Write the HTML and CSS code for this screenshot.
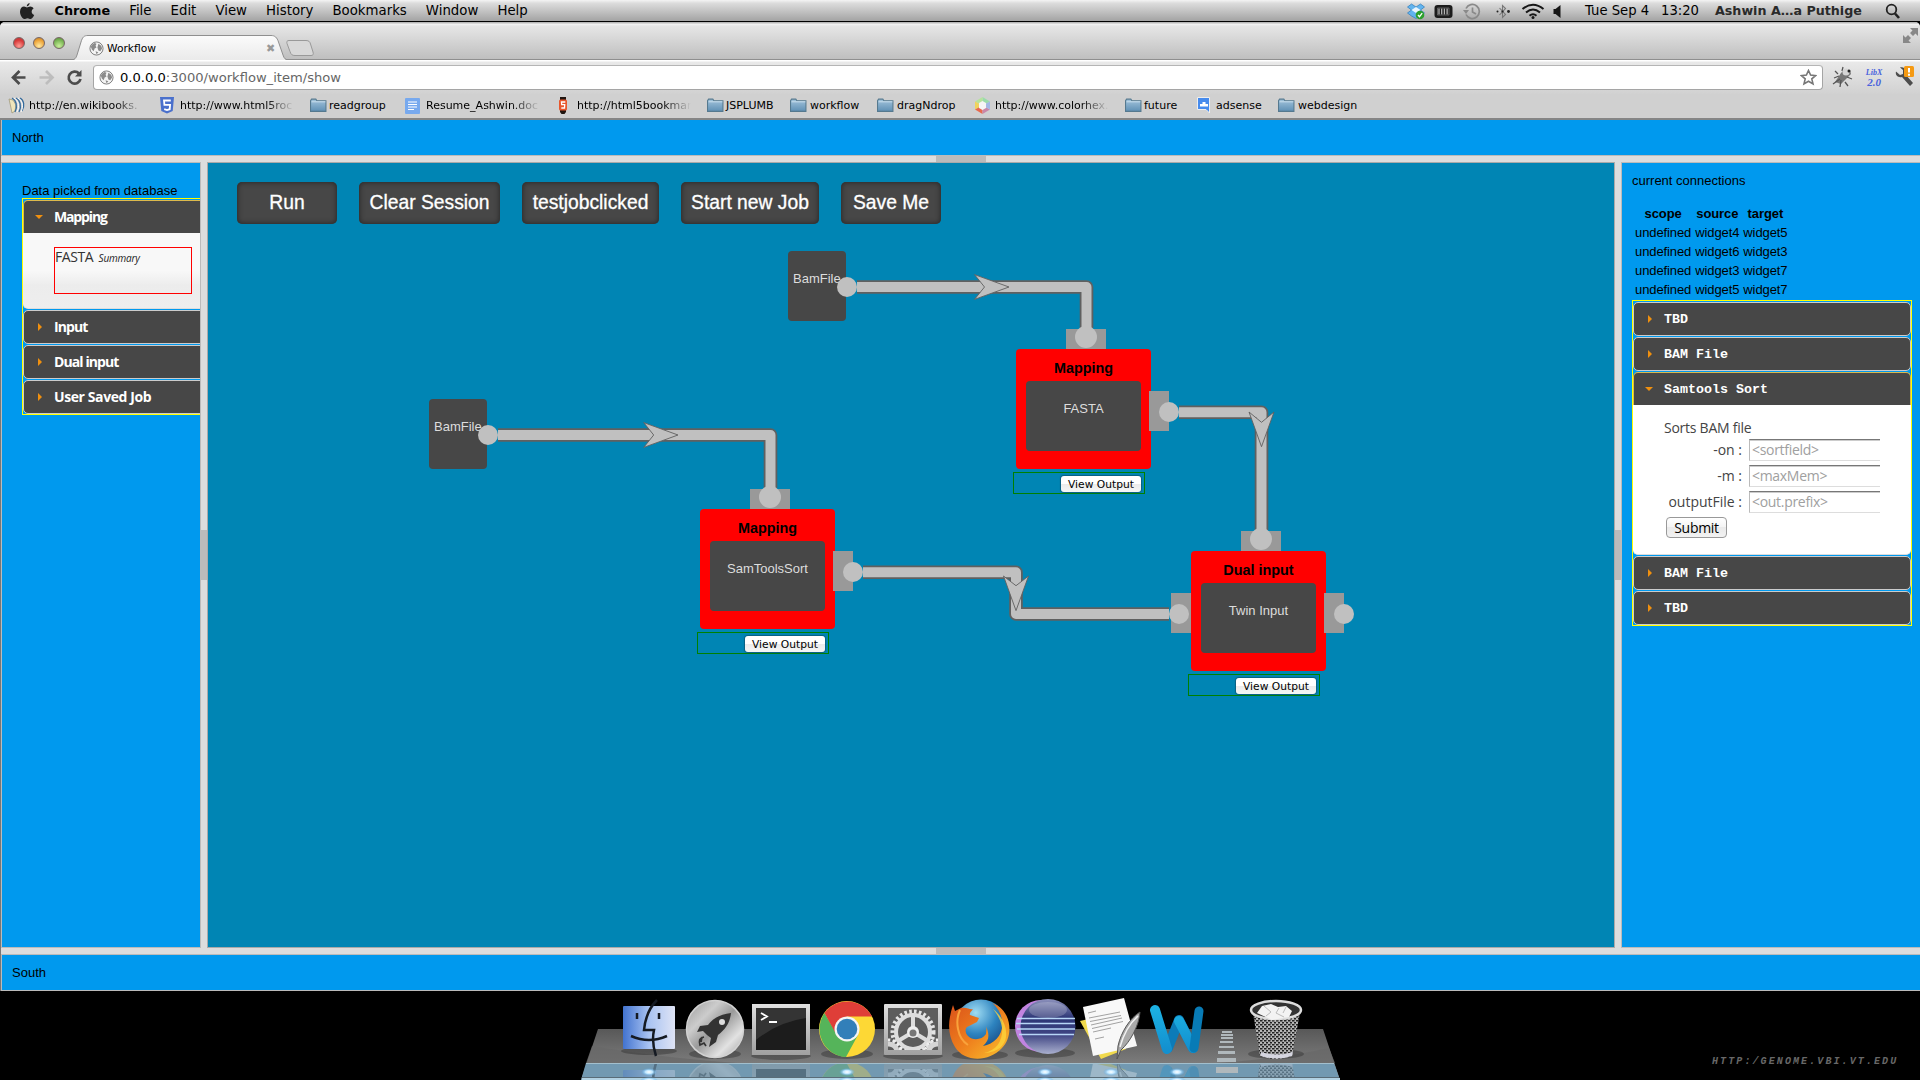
FILE: index.html
```html
<!DOCTYPE html>
<html lang="en">
<head>
<meta charset="utf-8">
<title>Workflow</title>
<link rel="stylesheet" href="styles.css">
</head>
<body>
<svg width="0" height="0" class="defs">
  <defs>
    <linearGradient id="gFolder" x1="0" y1="0" x2="0" y2="1"><stop offset="0" stop-color="#a3c4dc"/><stop offset="1" stop-color="#5f90b5"/></linearGradient>
    <symbol id="folder" viewBox="0 0 16 16"><path d="M.5 13.500V3.500l1-1.500h4l1 1.500h8.500v10z" fill="url(#gFolder)" stroke="#55798f"/><path d="M1.500 4.500h13" stroke="#c6dceb"/></symbol>
    <symbol id="globe" viewBox="0 0 16 16"><circle cx="8" cy="8" r="7" fill="#f4f4f4" stroke="#777"/><path d="M3 4l3-2 2 1-1 2 1 2-2 1-1 3-2-2-1-3zM10 3l3 2 1 3-2 3-2-1-1-3zM7 11l3 1-2 2z" fill="#8b8b8b"/></symbol>
  </defs>
</svg>

<header class="menubar">
  <svg class="apple" width="16" height="18" viewBox="0 0 16 18"><path d="M10.600 1c.1 1.700-1.200 3.300-2.800 3.400C7.600 2.800 9 1.200 10.600 1zM8 5.500c.8 0 1.700-.9 3.200-.9 1.300 0 2.600.7 3.400 1.900-2.900 1.700-2.300 5.500.6 6.600-.6 1.700-2.100 3.900-3.500 3.900-1.300 0-1.700-.8-3.200-.8s-1.900.8-3.200.8C3.300 17 1 12.700 1 9.700c0-3.300 2-5.100 4.100-5.100 1.300 0 2.200.9 2.900.9z" fill="#222"/></svg>
  <nav class="menus"><b>Chrome</b><span>File</span><span>Edit</span><span>View</span><span>History</span><span>Bookmarks</span><span>Window</span><span>Help</span></nav>
  <svg class="status" width="160" height="20" viewBox="0 0 160 20">
    <path d="M4.500 3l4.500 3 4.500-3 4 3-4 3 4 3-4 3v0l-4.500 2.500-4.500-2.500-4-3 4-3-4-3z" fill="#62b4ee" stroke="#2b7bbd" stroke-width=".7"/><path d="M9 6l4.500 3L9 12 4.500 9z" fill="#e9f5fd"/><circle cx="13" cy="14" r="4.300" fill="#2ca02c"/><path d="M11 14l1.500 1.700 2.700-3.500" stroke="#fff" stroke-width="1.300" fill="none"/>
    <rect x="27.500" y="4" width="18" height="13" rx="3" fill="#1c1c1c"/><path d="M32 7.500v6M34.700 7.500v6M37.400 7.500v6M40.100 7.500v6" stroke="#b5b5b5" stroke-width="1.300"/><path d="M30.500 7h11.500v7H30.500z" fill="none" stroke="#777" stroke-width=".7"/>
    <g fill="none" stroke="#8a8a8a" stroke-width="1.700"><path d="M59 7.500A7 7 0 1 1 59 13.500"/><path d="M65.500 6.500v4.500l3.500 2"/></g><path d="M56 9h6l-3 4z" fill="#8a8a8a"/>
    <path d="M92.500 7l6 6.500-3 3v-12l3 3-6 6.500" stroke="#777" stroke-width="1.100" fill="none"/><g fill="#222"><circle cx="90.500" cy="10.500" r="1"/><circle cx="95.500" cy="10.500" r="1.100"/><circle cx="101.500" cy="10.500" r="1.400"/></g>
    <g fill="none" stroke="#161616" stroke-width="2"><path d="M115.500 8q10.500-8.500 21 0"/><path d="M119 11.500q7-6 14 0"/><path d="M122.500 14.700q3.500-3 7 0"/></g><circle cx="126" cy="16.500" r="1.500" fill="#161616"/>
    <path d="M146.500 8h2l5-4v13l-5-4h-2z" fill="#161616"/>
  </svg>
  <span class="date">Tue Sep 4</span><span class="time">13:20</span><b class="user">Ashwin A…a Puthige</b>
  <svg class="lens" width="16" height="18" viewBox="0 0 16 18"><circle cx="6.500" cy="7.500" r="4.800" fill="none" stroke="#222" stroke-width="1.800"/><path d="M10 11.500l4 4.500" stroke="#222" stroke-width="2.600"/></svg>
</header>

<main class="window">
  <div class="tabstrip">
    <div class="lights"><i class="red"></i><i class="amber"></i><i class="green"></i></div>
    <div class="tab">
      <svg class="tabshape" width="246" height="26" viewBox="0 0 246 26"><defs><linearGradient id="gTab" x1="0" y1="0" x2="0" y2="1"><stop offset="0" stop-color="#fbfbfb"/><stop offset="1" stop-color="#e9e9e9"/></linearGradient></defs><path d="M0 25.500C5 25.500 6 23 7 20l4-13C12.500 2 14 .5 18 .5h183c4 0 6 2 7.500 6.500l4.500 13c1 3.500 2.500 5.500 6.500 5.500V27H0z" fill="url(#gTab)"/><path d="M0 25C5 25 6 23 7 20l4-13C12.500 2 14 .5 18 .5h183c4 0 6 2 7.500 6.500l4.500 13c1 3.500 2.500 5 6.500 5" fill="none" stroke="#8f8f8f"/><path d="M219 5.500h17c3 0 4 1.500 4.500 3.500l2.500 8c.8 2.500 0 3.500-2 3.500h-16c-3 0-4-1-5-4l-3-8c-.5-2 0-3 2-3z" fill="#d8d8d8" stroke="#999"/></svg>
      <svg class="fav" width="15" height="15"><use href="#globe"/></svg>
      <span class="tabname">Workflow</span>
      <span class="close">✖</span>
    </div>
    <svg class="full" width="15" height="15" viewBox="0 0 15 15" fill="#888"><path d="M7 0h8v8l-2.500-2.500L10 8 7 5l2.500-2.500zM0 7l2.500 2.500L5 7l3 3-2.500 2.500L8 15H0z"/></svg>
  </div>
  <div class="toolbar">
    <svg class="nav" width="85" height="22" viewBox="0 0 85 22" fill="none" stroke-width="2.700"><path d="M25.500 11.500H14M19.500 5l-6.500 6.500 6.500 6.500" stroke="#4c4c4c"/><path d="M39.500 11.500H51M46 5l6.500 6.500L46 18" stroke="#bdbdbd"/><path d="M79 7.500A6 6 0 1 0 80.500 13" stroke="#4c4c4c"/><path d="M75 10.500h6.500V4z" fill="#4c4c4c"/></svg>
    <div class="url">
      <svg width="15" height="15"><use href="#globe"/></svg>
      <span>0.0.0.0<em>:3000/workflow_item/show</em></span>
      <svg class="star" width="17" height="17" viewBox="0 0 17 17"><path d="M8.500 1.500l2.100 4.600 5 .5-3.800 3.300 1.200 5-4.500-2.700L4 14.900l1.200-5L1.400 6.600l5-.5z" fill="#fff" stroke="#777" stroke-width="1.600"/></svg>
    </div>
    <svg class="ext" width="92" height="24" viewBox="0 0 92 24">
      <path d="M4 17l6-9 4-4 5 1 1 4-4 4-6 6z" fill="#777"/><path d="M3 13l5-2M7 9L4 6M11 6l1-4M2 19l7-5M9 22l1-7M14 17l3 4M16 12l5 2" stroke="#555" stroke-width="1.300"/><circle cx="15" cy="7" r="3.500" fill="#d5d5d5"/><circle cx="18" cy="6" r="1.500" fill="#222"/>
      <g transform="translate(62 1)"><path d="M3 5.500L7 9l3-1V4L7 1.500c3-.8 6 1 6 4l-.5 3L20 17l-3 3-8-9c-4 1-7-2-6-5.500z" fill="#4d4d4d"/><rect x="11" y="0" width="10" height="11" rx="1.500" fill="#f59a13"/><path d="M16 2v4.500M16 7.800v2" stroke="#fff" stroke-width="2"/></g>
    </svg>
    <span class="libx"><small>LibX</small>2.0</span>
  </div>
  <nav class="bookmarks">
    <a class="cut"><svg width="17" height="17" viewBox="0 0 17 17" fill="none"><path d="M1 2l4 1 3 5-1 6-3 2-1-5z" fill="#efe5bb" stroke="#9a9273" stroke-width=".7"/><path d="M4 1c4 2 6 8 3 14M8 1c4 2 6 8 3 14M12 1c4 2 5 8 2 13" stroke="#356b9c" stroke-width="1.300"/><path d="M6 1c4 2 6 8 3 14M10 1c4 2 6 8 3 14" stroke="#fff"/></svg><span>http://en.wikibooks.</span></a>
    <a class="cut"><svg width="14" height="17" viewBox="0 0 14 17"><path d="M0 0h14l-1.300 14L7 16.500 1.300 14z" fill="#4a70cc"/><path d="M10.800 3.500H4l.4 4.300h5.700l-.4 4.400L7 13l-2.800-.9" fill="none" stroke="#fff" stroke-width="1.800"/></svg><span>http://www.html5roc</span></a>
    <a><svg width="17" height="17"><use href="#folder"/></svg><span>readgroup</span></a>
    <a class="cut"><svg width="15" height="16" viewBox="0 0 15 16"><rect width="15" height="16" rx="1" fill="#77a9ee"/><path d="M3 4h9M3 6.500h9M3 9h9M3 11.500h6" stroke="#fff" stroke-width="1.200"/></svg><span>Resume_Ashwin.doc</span></a>
    <a class="cut"><svg width="14" height="17" viewBox="0 0 14 17"><path d="M3 0h6v3H3zM3 13h6v2l-1.500 2h-3L3 15z" fill="#201510"/><rect x="2" y="2.500" width="8" height="11" rx="1.500" fill="#e8572d"/><path d="M8.300 5H4.500l.2 2.700h3L7.500 11H4.300" fill="none" stroke="#fff" stroke-width="1.300"/></svg><span>http://html5bookmar</span></a>
    <a><svg width="17" height="17"><use href="#folder"/></svg><span>JSPLUMB</span></a>
    <a><svg width="17" height="17"><use href="#folder"/></svg><span>workflow</span></a>
    <a><svg width="17" height="17"><use href="#folder"/></svg><span>dragNdrop</span></a>
    <a class="cut"><svg width="15" height="17" viewBox="0 0 15 17"><path d="M7.500 0L15 4.500 7.500 8.500z" fill="#9bdcaa"/><path d="M7.500 0L0 4.500l7.500 4z" fill="#b6e39c"/><path d="M0 4.500v8l7.500-4z" fill="#f0d45e"/><path d="M0 12.500L7.500 17V8.500z" fill="#e8694e"/><path d="M15 12.500L7.500 17V8.500z" fill="#c987a8"/><path d="M15 4.500v8l-7.500-4z" fill="#a4b8e4"/><path d="M7.500 4l3.500 2v5l-3.500 2L4 11V6z" fill="#f7f5f5"/></svg><span>http://www.colorhex.</span></a>
    <a><svg width="17" height="17"><use href="#folder"/></svg><span>future</span></a>
    <a><svg width="14" height="17" viewBox="0 0 14 17"><path d="M.5.500h12V16l-3.500-3.500H.5z" fill="#468bed" stroke="#eee"/><path d="M3 9.500V7h2.500V5h3v2H11v2.500z" fill="#fff"/></svg><span>adsense</span></a>
    <a><svg width="17" height="17"><use href="#folder"/></svg><span>webdesign</span></a>
  </nav>

  <div class="page">
    <section class="north">North</section>
    <div class="bar horizontal"><i></i></div>
    <div class="middle">
      <aside class="west">
        <p>Data picked from database</p>
        <div class="accordion">
          <h3 class="open tight">Mapping</h3>
          <div class="pane"><div class="item">FASTA <em>Summary</em></div></div>
          <h3>Input</h3>
          <h3>Dual input</h3>
          <h3 class="loose">User Saved Job</h3>
        </div>
      </aside>
      <div class="bar vertical"><i></i></div>
      <section class="center">
        <div class="actions"><button>Run</button><button>Clear Session</button><button>testjobclicked</button><button>Start new Job</button><button>Save Me</button></div>
        <div class="source n1">BamFile</div>
        <div class="source n2">BamFile</div>
        <div class="node n3"><h4>Mapping</h4><div class="tool">FASTA</div><div class="out"><button>View Output</button></div></div>
        <div class="node n4"><h4>Mapping</h4><div class="tool">SamToolsSort</div><div class="out"><button>View Output</button></div></div>
        <div class="node n5"><h4>Dual input</h4><div class="tool">Twin Input</div><div class="out"><button>View Output</button></div></div>
        <svg class="wires" width="1406" height="784" viewBox="208 163 1406 784">
          <g fill="#999"><path d="M1066 329h40v20h-40zM1149 391h20v40h-20zM750 489h40v20h-40zM833 551h20v40h-20zM1241 531h40v20h-40zM1171 593h20v40h-20zM1324 593h20v40h-20z"/></g>
          <g fill="none" stroke="#606060" stroke-width="13.600" stroke-linejoin="round"><path d="M857 287H1086.500V328"/><path d="M498 435H770.500V488"/><path d="M1179 412.200H1261.500V530"/><path d="M863 572.200H1016V614H1169"/></g>
          <g fill="none" stroke="#c0c0c0" stroke-width="10" stroke-linejoin="round"><path d="M857 287H1086.500V328"/><path d="M498 435H770.500V488"/><path d="M1179 412.200H1261.500V530"/><path d="M863 572.200H1016V614H1169"/></g>
          <g fill="#c0c0c0" stroke="#606060" stroke-width=".9"><path d="M974.500 274.600L1009 287l-34.500 12.400L984.500 287z"/><path d="M643.700 422.600L678 435l-34.300 12.400 10-12.400z"/><path d="M1249 412l12.500 10.300L1274 412l-12.500 34.700z"/><path d="M1003.500 576l12.500 9.700 12.500-9.700L1016 610.600z"/></g>
          <g fill="#c0c0c0"><circle cx="847" cy="287" r="10"/><circle cx="488" cy="435" r="10"/><circle cx="1086" cy="337" r="11"/><circle cx="770" cy="497" r="11"/><circle cx="1261" cy="539" r="11"/><circle cx="1169" cy="412" r="10"/><circle cx="853" cy="572" r="10"/><circle cx="1179" cy="614" r="10"/><circle cx="1344" cy="614" r="10"/></g>
        </svg>
      </section>
      <div class="bar vertical"><i></i></div>
      <aside class="east">
        <p>current connections</p>
        <table><tr><th>scope</th><th>source</th><th>target</th></tr>
          <tr><td>undefined</td><td>widget4</td><td>widget5</td></tr>
          <tr><td>undefined</td><td>widget6</td><td>widget3</td></tr>
          <tr><td>undefined</td><td>widget3</td><td>widget7</td></tr>
          <tr><td>undefined</td><td>widget5</td><td>widget7</td></tr></table>
        <div class="accordion mono">
          <h3>TBD</h3>
          <h3>BAM File</h3>
          <h3 class="open">Samtools Sort</h3>
          <form class="pane form">
            <div class="lead">Sorts BAM file</div>
            <label><span>-on :</span><i>&lt;sortfield&gt;</i></label>
            <label><span>-m :</span><i>&lt;maxMem&gt;</i></label>
            <label><span>outputFile :</span><i>&lt;out.prefix&gt;</i></label>
            <button type="button">Submit</button>
          </form>
          <h3>BAM File</h3>
          <h3>TBD</h3>
        </div>
      </aside>
    </div>
    <div class="bar horizontal"><i></i></div>
    <section class="south">South</section>
  </div>
</main>

<footer class="desktop">
  <svg width="800" height="89" viewBox="560 991 800 89">
    <defs>
      <linearGradient id="gShelf" x1="0" y1="0" x2="0" y2="1"><stop offset="0" stop-color="#585858"/><stop offset="1" stop-color="#8d8d8d"/></linearGradient>
      <linearGradient id="gFind" x1="0" y1="0" x2="1" y2="0"><stop offset="0" stop-color="#4273cf"/><stop offset=".5" stop-color="#a9c3f2"/><stop offset="1" stop-color="#dfe4f5"/></linearGradient>
      <linearGradient id="gMetal" x1="0" y1="0" x2="1" y2="1"><stop offset="0" stop-color="#999"/><stop offset=".3" stop-color="#ccc"/><stop offset=".5" stop-color="#9a9a9a"/><stop offset=".75" stop-color="#e2e2e2"/><stop offset="1" stop-color="#999"/></linearGradient>
      <linearGradient id="gFrame" x1="0" y1="0" x2="0" y2="1"><stop offset="0" stop-color="#e0e0e0"/><stop offset="1" stop-color="#a0a0a0"/></linearGradient>
      <linearGradient id="gEcl" x1="0" y1="0" x2="0" y2="1"><stop offset="0" stop-color="#8d92bd"/><stop offset=".35" stop-color="#2c3575"/><stop offset=".65" stop-color="#3f4583"/><stop offset="1" stop-color="#aab0cf"/></linearGradient>
      <linearGradient id="gWord" x1="0" y1="0" x2="0" y2="1"><stop offset="0" stop-color="#1cb0e2"/><stop offset="1" stop-color="#1390cf"/></linearGradient>
      <linearGradient id="gFire" x1="0" y1="0" x2="1" y2="1"><stop offset="0" stop-color="#d9501a"/><stop offset=".5" stop-color="#ee7f1d"/><stop offset="1" stop-color="#fbc52f"/></linearGradient>
      <radialGradient id="gSea" cx=".4" cy=".25" r=".8"><stop offset="0" stop-color="#9fdcf3"/><stop offset=".5" stop-color="#2d83bf"/><stop offset="1" stop-color="#123e78"/></radialGradient>
      <pattern id="mesh" width="4" height="4" patternUnits="userSpaceOnUse"><rect width="4" height="4" fill="#b5b5b5"/><path d="M0 0h2.500v1.500H0zM2 2h2.500v1.500H2z" fill="#222"/></pattern>
      <radialGradient id="gGlow"><stop offset="0" stop-color="#fff"/><stop offset=".45" stop-color="#bfe6ff"/><stop offset="1" stop-color="#4fa8ec" stop-opacity="0"/></radialGradient>
      <clipPath id="under"><path d="M586 1063H1334L1340 1080H581z"/></clipPath>
      <clipPath id="gearbox"><rect x="888" y="1008" width="50" height="42"/></clipPath>
      <g id="icons">
        <g><rect x="623" y="1006" width="52" height="43" rx="1" fill="url(#gFind)"/><path d="M657 1000c-9 9-12 20-13 30h10c-2 9-1 17 2 26" fill="none" stroke="#151a22" stroke-width="2.500"/><path d="M631 1036q18 8 36 0M637 1013v6M659 1013v6" fill="none" stroke="#151a22" stroke-width="2.500"/></g>
        <g><circle cx="715" cy="1029" r="28.500" fill="url(#gMetal)" stroke="#d2d2d2" stroke-width="1.500"/><path d="M731 1013c-10 1-18 5-23 12l-8 1-3 6 6-1 4 4 4 3-2 9 7-5 2-7c8-6 12-13 13-22z" fill="#333"/><circle cx="722" cy="1022" r="3" fill="#ddd"/><path d="M704 1037c-5 1-5 4-4 8l4-2 2 3M702 1037l-1 5" stroke="#333" stroke-width="1.700" fill="none"/></g>
        <g><path d="M752 1004h58v51h-58z" fill="url(#gFrame)"/><path d="M756 1008h50v42h-50z" fill="#1c1c1c"/><path d="M756 1008h50v10q-28 4-50 22z" fill="#343434"/><path d="M761 1013l6 3.500-6 3.500M769 1022h8" fill="none" stroke="#fff" stroke-width="1.800"/></g>
        <g><circle cx="847" cy="1029" r="28" fill="#fdd835"/><path d="M824.500 1013A28 28 0 0 0 846 1057L858 1035 836 1033z" fill="#55b45a"/><path d="M824.500 1013A28 28 0 0 1 872 1016.500H847L835.500 1033z" fill="#df3e38"/><circle cx="847" cy="1029" r="12.500" fill="#f5f5f5"/><circle cx="847" cy="1029" r="10.300" fill="#327fb9"/></g>
        <g><rect x="884" y="1004" width="58" height="51" rx="1" fill="url(#gFrame)"/><rect x="888" y="1008" width="50" height="42" fill="#5d5d5d"/><g clip-path="url(#gearbox)" fill="none"><circle cx="913" cy="1032" r="17" stroke="#ddd" stroke-width="4"/><circle cx="913" cy="1032" r="20.500" stroke="#e4e4e4" stroke-width="4" stroke-dasharray="2.600 2.250"/><path d="M913 1032v-17M913 1032l-15 9M913 1032l15 9" stroke="#ddd" stroke-width="4"/><circle cx="913" cy="1032" r="6" fill="#eee"/><circle cx="913" cy="1033" r="3.500" fill="#777"/><g stroke="#d5d5d5" stroke-width="5"><circle cx="889" cy="1052" r="8"/><circle cx="937" cy="1052" r="8"/></g><g stroke="#eee" stroke-width="3" stroke-dasharray="2.500 2.500"><circle cx="889" cy="1052" r="12"/><circle cx="937" cy="1052" r="12"/></g></g></g>
        <g><circle cx="981" cy="1026" r="26.500" fill="url(#gSea)"/><path d="M953 1005l2 6 6-3c6-1 9 2 12 1-1 2-4 4-3 6l9 3-2 4-10 5c-2 2-2 6 1 9 5 5 14 4 18-2 0-3 1-5 0-8 4 10 3 14-3 20 12-2 21-12 19-25-1-9-5-14-10-18 20 7 22 33 10 45-14 15-38 14-47-1-8-13-7-27-2-42z" fill="url(#gFire)"/><path d="M984 1053c14-3 19-14 18-25-1-8-5-14-9-19 18 14 20 43-9 44z" fill="#fcd33b" opacity=".8"/><path d="M960 1010c-5 11-3 28 8 35" fill="none" stroke="#f9a23b" stroke-width="2"/></g>
        <g><circle cx="1041" cy="1026" r="26" fill="#c184e0"/><circle cx="1048" cy="1026.500" r="27.500" fill="url(#gEcl)"/><ellipse cx="1048" cy="1010" rx="19" ry="8" fill="#fff" opacity=".2"/><path d="M1017 1018.500h58M1016 1023.500h59M1017 1029h58M1019 1034.500h55" stroke="#b7d6f7" stroke-width="1.300"/></g>
        <g><path d="M1080 1021l38-9 8 37-25 10z" fill="#f1da4e"/><path d="M1083 1007l41-9 13 48-44 10z" fill="#f8f8f8"/><path d="M1088 1013l8-2M1089 1018l31-6M1090 1021.500l31-6M1091 1025l31-7M1092 1028.500l31-7M1093 1032l18-4M1095 1039l9-2" stroke="#8b8b8b" stroke-width=".8"/><path d="M1140 1012c-1 14-10 30-19 38l-4 9 1-13c3-14 12-28 22-34z" fill="#a9a9a9" stroke="#555"/><path d="M1138 1016c-9 8-15 20-18 31" stroke="#f2f2f2" stroke-width="1.500" fill="none"/></g>
        <g fill="none" stroke-linecap="round" stroke-linejoin="round" stroke-width="10"><path d="M1168 1048l11-28 14 28" stroke="#0c7bb8"/><path d="M1155 1010l12 39M1179 1021l14 27" stroke="url(#gWord)"/><path d="M1199 1011l-5 37" stroke="#087bb6" stroke-width="9"/></g>
        <g><path d="M1252 1007l8 49q16 6 32 0l9-49z" fill="url(#mesh)"/><path d="M1261 1052v4q15 5 31 0l1-4q-16 5-32 0z" fill="#d5d5df"/><ellipse cx="1276" cy="1010" rx="25" ry="9" fill="#333" stroke="#ddd" stroke-width="2.500"/><path d="M1257 1013l5-7 9-2 7 3 8-1 6 5-3 6-17 3z" fill="#f3f3f3"/><path d="M1264 1006l7 6-5 4M1279 1008l-3 5 8 4M1286 1007l-3 6" stroke="#bbb" fill="none"/></g>
      </g>
    </defs>
    <path d="M598 1029H1323L1340 1080H581z" fill="url(#gShelf)"/>
    <path d="M592 1046q80 14 190 20h390q100-5 157-18l6 15H586z" fill="#686868" opacity=".75"/>
    <path d="M586 1063H1334L1340 1080H581z" fill="#7299b1"/>
    <g clip-path="url(#under)" opacity=".32"><use href="#icons" transform="matrix(1 0 0 -1 0 2119)"/></g>
    <path d="M586 1063.500H1334" stroke="#a2bfcd"/><path d="M582 1077.500H1339" stroke="#596c78"/><path d="M582 1079H1340" stroke="#b2d2e3" stroke-width="2"/>
    <g fill="#000" opacity=".25"><ellipse cx="649" cy="1051" rx="28" ry="4"/><ellipse cx="715" cy="1054" rx="26" ry="5"/><ellipse cx="781" cy="1056" rx="30" ry="4"/><ellipse cx="847" cy="1054" rx="26" ry="5"/><ellipse cx="913" cy="1056" rx="30" ry="4"/><ellipse cx="980" cy="1055" rx="28" ry="5"/><ellipse cx="1045" cy="1053" rx="30" ry="5"/><ellipse cx="1276" cy="1054" rx="28" ry="5"/></g>
    <use href="#icons"/>
    <path d="M1222 1031h10v2h-10zM1221 1034h12v2h-12zM1221 1037h12v2h-12zM1220 1041h13v2h-13zM1219 1046h15v2h-15zM1218 1051h17v3h-17zM1217 1058h19v4h-19zM1216 1067h22v6h-22z" fill="#b0b8bc"/>
    <g fill="url(#gGlow)"><ellipse cx="649" cy="1072" rx="8" ry="4"/><ellipse cx="847" cy="1072" rx="8" ry="4"/><ellipse cx="1045" cy="1072" rx="8" ry="4"/><ellipse cx="1111" cy="1072" rx="8" ry="4"/><ellipse cx="1177" cy="1072" rx="8" ry="4"/><ellipse cx="649" cy="1080" rx="9" ry="3"/><ellipse cx="847" cy="1080" rx="9" ry="3"/><ellipse cx="1045" cy="1080" rx="9" ry="3"/><ellipse cx="1111" cy="1080" rx="9" ry="3"/><ellipse cx="1177" cy="1080" rx="9" ry="3"/></g>
  </svg>
  <span class="wall">HTTP:/GENOME.VBI.VT.EDU</span>
</footer>
</body>
</html>
```
FILE: styles.css
```css
* { box-sizing: border-box; }
body { margin: 0; width: 1920px; height: 1080px; overflow: hidden; background: #000; display: flex; flex-direction: column; font: 13px/15px "Liberation Sans", Arial, sans-serif; color: #000; }
svg { display: block; flex: none; }
.defs { position: absolute; }
p, h3, h4 { margin: 0; }
button { font: inherit; margin: 0; padding: 0; }

.menubar { height: 22px; flex: none; display: flex; align-items: center; padding-left: 19px; background: linear-gradient(#f4f4f4, #dcdcdc 15%, #a3a3a3); border-bottom: 1px solid #000; font: 13.3px/21px "DejaVu Sans", sans-serif; white-space: nowrap; }
.menus { display: flex; gap: 19.100px; margin-left: 19.500px; width: 1352.500px; }
.menus b { font-size: 12.800px; }
.date { width: 76px; margin-left: 18px; font-size: 13.2px; }
.time { width: 54px; font-size: 13.2px; }
.user { width: 170px; font-size: 12.700px; color: #2a2a2a; }

.window { height: 969px; flex: none; display: flex; flex-direction: column; background: #d0d0d0; border-radius: 5px 5px 0 0; font-family: "DejaVu Sans", sans-serif; }
.tabstrip { height: 38px; flex: none; display: flex; justify-content: space-between; background: linear-gradient(#b8b8b8 1px, #f5f5f5 2px, #e6e6e6 4px, #bfbfbf); border-bottom: 1px solid #8f8f8f; border-radius: 5px 5px 0 0; }
.lights { display: flex; gap: 8px; padding: 15px 0 0 13px; width: 70px; flex: none; }
.lights i { width: 12px; height: 12px; border-radius: 50%; border: 1px solid #766; }
.red { background: radial-gradient(circle at 50% 80%, #ff9c94, #d93c3c 60%, #b33); }
.amber { background: radial-gradient(circle at 50% 80%, #ffe9a0, #eda53b 60%, #b97a24); }
.green { background: radial-gradient(circle at 50% 80%, #c9f09b, #7cb757 60%, #548a38); }
.tab { position: relative; display: flex; align-items: center; height: 26px; width: 246px; margin: 13px auto 0 0; padding-left: 19px; font-size: 10.700px; }
.tabshape { position: absolute; left: 0; top: 0; }
.fav, .tabname, .close { position: relative; }
.tabname { margin-left: 3px; }
.close { margin-left: 110px; color: #999; font-size: 11px; }
.full { margin: 6px 2px 0 0; }
.toolbar { height: 34px; flex: none; display: flex; align-items: center; background: linear-gradient(#fff 1px, #e9e9e9 2px, #d1d1d1); position: relative; }
.nav { margin-right: 8px; }
.url { width: 1730px; flex: none; height: 25px; margin-top: 1px; border: 1px solid #a5a5a5; border-top-color: #b5b5b5; border-radius: 4px; background: #fff; display: flex; align-items: center; padding: 0 5px 1px 5px; font-size: 13.1px; }
.url span { margin-left: 6px; }
.url em { font-style: normal; color: #666; }
.star { margin-left: auto; }
.ext { margin-left: 8px; }
.libx { position: absolute; right: 34px; top: 9px; width: 24px; text-align: center; color: #4a62dd; font: italic bold 11px/11px "Liberation Serif", serif; }
.libx small { display: block; font-size: 8px; line-height: 8px; }
.bookmarks { height: 26px; flex: none; display: flex; align-items: center; padding: 0 0 1px 8px; border-bottom: 2px solid #858585; font-size: 11px; white-space: nowrap; }
.bookmarks a { display: flex; align-items: center; flex: none; gap: 4px; }
.bookmarks a:nth-child(1) { width: 152px; }
.bookmarks a:nth-child(2) { width: 150px; gap: 6px; }
.bookmarks a:nth-child(3) { width: 95px; gap: 2px; }
.bookmarks a:nth-child(4) { width: 152px; gap: 6px; }
.bookmarks a:nth-child(5) { width: 150px; gap: 6px; }
.bookmarks a:nth-child(6) { width: 83px; gap: 2px; }
.bookmarks a:nth-child(7) { width: 87px; gap: 3px; }
.bookmarks a:nth-child(8) { width: 98px; gap: 3px; }
.bookmarks a:nth-child(9) { width: 150px; gap: 5px; }
.bookmarks a:nth-child(10) { width: 72px; gap: 2px; }
.bookmarks a:nth-child(11) { width: 81px; gap: 5px; }
.bookmarks a:nth-child(12) { gap: 3px; }
.cut span { width: 114px; overflow: hidden; -webkit-mask-image: linear-gradient(90deg, #000 75%, transparent); mask-image: linear-gradient(90deg, #000 75%, transparent); }

.page { flex: 1; display: flex; flex-direction: column; border-left: 1px solid #777; background: #ddd; font-family: "Liberation Sans", Arial, sans-serif; }
.north, .south { height: 36px; flex: none; background: #0099ee; padding: 10px 0 0 10px; border: solid #bbb; border-width: 0 0 1px 1px; }
.south { height: 37px; border-top-width: 1px; }
.bar { background: #ddd; display: flex; align-items: center; justify-content: center; flex: none; }
.bar i { background: #bbb; }
.horizontal { height: 6px; }
.horizontal i { width: 50px; height: 6px; }
.vertical { width: 6px; }
.vertical i { width: 6px; height: 50px; }
.middle { height: 786px; flex: none; display: flex; }
.west, .east { background: #0099ee; border: 1px solid #bbb; overflow: hidden; }
.west { width: 200px; padding: 20px 0 0 20px; }
.center { width: 1408px; position: relative; background: #0085b4; border: 1px solid #aaa; }
.east { width: 299px; padding: 10px 0 0 10px; border-right: 0; }
.east table { margin-top: 15px; border-spacing: 2px; }
.east td, .east th { padding: 1px; line-height: 15px; letter-spacing: -.1px; }

.accordion { width: 280px; border: 1px solid #ff0; padding: 1px 0 0; font: 14px "Open Sans", "Noto Sans", sans-serif; }
.accordion h3 { position: relative; height: 34px; margin-bottom: 1px; padding-left: 30px; background: #474747; border: 1px solid #ccc; border-radius: 5px; color: #fff; font-size: 14px; line-height: 31px; font-weight: 700; letter-spacing: -.9px; }
.accordion h3.tight { letter-spacing: -1.150px; }
.accordion h3.loose { letter-spacing: -.4px; }
.accordion h3:last-child { margin-bottom: 0; }
.accordion h3::before { content: ""; position: absolute; left: 14px; top: 12px; border: 4px solid transparent; border-left-color: #f0900f; border-right: 0; }
.accordion h3.open { height: 33px; margin: 0; border-bottom: 0; border-color: #dcb94c; border-radius: 5px 5px 0 0; }
.accordion h3.open::before { left: 11px; top: 14px; border: 4px solid transparent; border-top-color: #f0900f; border-bottom: 0; }
.pane { height: 76px; margin-bottom: 1px; padding: 14px 0 0 31px; border-bottom: 1px solid #ddd; border-radius: 0 0 5px 5px; background: linear-gradient(#f8f8f8 50%, #ececec 70%, #eee); }
.item { width: 138px; height: 47px; border: 1px solid #f00; color: #333; font-size: 14px; line-height: 18px; letter-spacing: -.4px; }
.item em { font-size: 10px; letter-spacing: -.2px; margin-left: 2px; color: #222; }
.accordion.mono h3 { font: bold 13.33px/34px "Liberation Mono", "Courier New", monospace; letter-spacing: 0; }
.form { height: 150px; background: #fff; color: #444; padding: 13px 0 0 31px; }
.lead { height: 21px; line-height: 19px; letter-spacing: -.25px; }
.form label { display: flex; height: 26px; letter-spacing: -.3px; line-height: 21px; }
.form label span { width: 78px; text-align: right; margin-right: 7px; letter-spacing: 0; }
.form label i { width: 131px; height: 22px; padding-left: 2px; font-style: normal; color: #a0a0a0; border: 1px solid #ddd; border-top: 1px solid #777; border-left-color: #bbb; border-right: 0; line-height: 19px; box-shadow: inset 0 1px #ccc; }
.form button { display: block; width: 61px; height: 21px; margin-left: 2px; border: 1px solid #999; border-radius: 4px; background: linear-gradient(#fff, #f3f3f3 50%, #eaeaea 50%, #f2f2f2); color: #000; font-size: 14px; line-height: 17px; letter-spacing: -.3px; }

.actions { display: flex; gap: 22px; padding: 19px 0 0 29px; }
.actions button { width: 100px; height: 42px; border: 0; border-radius: 5px; background: #474747; box-shadow: inset 0 0 5px 1px #2b2b2b; color: #fff; font-size: 19.300px; line-height: 42px; white-space: nowrap; -webkit-text-stroke: .3px #fff; }
.actions button:nth-child(2) { width: 141px; }
.actions button:nth-child(3) { width: 137px; }
.actions button:nth-child(4) { width: 138px; }
.source, .node, .wires { position: absolute; }
.wires { left: 0; top: 0; }
.source { width: 58px; height: 70px; border-radius: 4px; background: #474747; color: #ddd; padding: 20px 0 0 5px; }
.n1 { left: 580px; top: 88px; }
.n2 { left: 221px; top: 236px; }
.node { width: 135px; height: 120px; border-radius: 4px; background: #f00; text-align: center; padding: 11px 10px 0; }
.n3 { left: 808px; top: 186px; }
.n4 { left: 492px; top: 346px; }
.n5 { left: 983px; top: 388px; }
.node h4 { height: 21px; font-size: 14.400px; line-height: 16px; }
.tool { height: 70px; border-radius: 4px; background: #474747; color: #ddd; padding-top: 20px; }
.out { width: 132px; height: 22px; margin: 21px 0 0 -13px; border: 1px solid green; padding: 3px 3px 0 0; display: flex; justify-content: flex-end; }
.out button { width: 80px; height: 16px; border: 0; border-radius: 3px; background: linear-gradient(#fff 50%, #ebebeb 50%, #f6f6f6); box-shadow: 0 0 1px 1px #0a5f80; padding-top: 1px; font: 10.700px/15px "DejaVu Sans", sans-serif; white-space: nowrap; }

.desktop { height: 89px; display: flex; padding-left: 560px; }
.wall { margin: 63px 0 0 352px; color: #686868; font: italic bold 10px/16px "Liberation Mono", monospace; letter-spacing: 2.100px; white-space: nowrap; }
```
